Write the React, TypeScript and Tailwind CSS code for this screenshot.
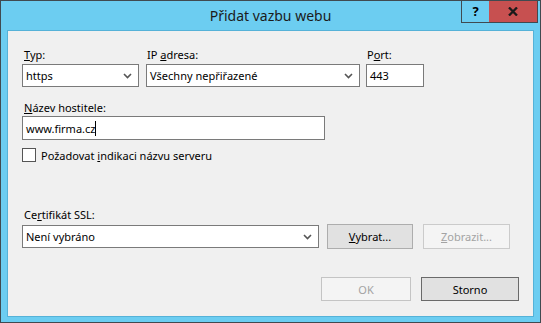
import React from 'react';

function Chevron() {
    return (
        <svg width="9" height="6" viewBox="0 0 9 6" className="shrink-0">
            <path d="M1 1 L4.5 4.5 L8 1" fill="none" stroke="#555" strokeWidth="1.6" />
        </svg>
    );
}

function Combo({ value, width }: { value: string; width: string }) {
    return (
        <div className={`${width} h-[23px] flex items-center justify-between border border-[#7a7a7a] bg-white pl-[3px] pr-[6px]`}>
            <span>{value}</span>
            <Chevron />
        </div>
    );
}

export default function App() {
    return (
        <div className="w-[541px] h-[323px] relative flex flex-col border border-[#404a50] bg-[#6ccdf1] font-['Noto_Sans',sans-serif] text-[11px] leading-[15px] text-black">
            <div className="h-[29px] flex items-center justify-center text-[14px] text-[#1b1b1b]">
                Přidat vazbu webu
            </div>
            <div className="absolute top-0 right-[2px] flex h-[22px] border-x border-b border-[#404a50]">
                <div className="w-[27px] flex items-center justify-center font-bold text-[13px]">?</div>
                <div className="w-[48px] flex items-center justify-center bg-[#c75050]">
                    <svg width="10" height="9" viewBox="0 0 10 9">
                        <path d="M1 0.5 L9 8.5 M9 0.5 L1 8.5" stroke="#1a1a1a" strokeWidth="2.3" />
                    </svg>
                </div>
            </div>

            <div className="mx-[6px] h-[287px] border border-[#55b2d8] bg-[#f0f0f0] pl-[14px] pt-[16px] flex flex-col">
                <div className="flex">
                    <div className="w-[117px] flex flex-col">
                        <div className="h-[15px] pl-[2px]"><span className="underline">T</span>yp:</div>
                        <div className="mt-[2px]"><Combo value="https" width="w-[117px]" /></div>
                    </div>
                    <div className="ml-[7px] w-[214px] flex flex-col">
                        <div className="h-[15px] pl-[1px]">IP <span className="underline">a</span>dresa:</div>
                        <div className="mt-[2px]"><Combo value="Všechny nepřiřazené" width="w-[214px]" /></div>
                    </div>
                    <div className="ml-[6px] w-[58px] flex flex-col">
                        <div className="h-[15px] pl-[1px]">P<span className="underline">o</span>rt:</div>
                        <div className="mt-[2px] h-[23px] border border-[#7a7a7a] bg-white pl-[3px] flex items-center">443</div>
                    </div>
                </div>

                <div className="mt-[13px] h-[15px] pl-[2px]"><span className="underline">N</span>ázev hostitele:</div>
                <div className="mt-[1px] w-[303px] h-[24px] border border-[#7a7a7a] bg-white pl-[3px] flex items-center">
                    www.firma.cz<span className="w-px h-[15px] bg-black" />
                </div>

                <div className="mt-[8px] h-[14px] flex items-center">
                    <div className="w-[14px] h-[14px] border border-[#555] bg-white" />
                    <span className="ml-[5px]">Požadovat <span className="underline">i</span>ndikaci názvu serveru</span>
                </div>

                <div className="mt-[45px] h-[15px] pl-[2px]">Ce<span className="underline">r</span>tifikát SSL:</div>
                <div className="mt-[2px] flex items-start">
                    <div className="mt-[1px]"><Combo value="Není vybráno" width="w-[297px]" /></div>
                    <div className="ml-[8px] w-[86px] h-[25px] border border-[#adadad] bg-[#e1e1e1] flex items-center justify-center">
                        <span><span className="underline">V</span>ybrat...</span>
                    </div>
                    <div className="ml-[10px] w-[87px] h-[25px] border border-[#cbcbcb] bg-[#f4f4f4] text-[#a3a3a3] flex items-center justify-center">
                        <span><span className="underline">Z</span>obrazit...</span>
                    </div>
                </div>

                <div className="mt-[28px] pr-[14px] flex justify-end">
                    <div className="w-[90px] h-[24px] border border-[#c4c4c4] bg-[#f4f4f4] text-[#a3a3a3] flex items-center justify-center">OK</div>
                    <div className="ml-[10px] w-[98px] h-[24px] border border-[#6a6a6a] bg-[#e1e1e1] flex items-center justify-center">Storno</div>
                </div>
            </div>
        </div>
    );
}
